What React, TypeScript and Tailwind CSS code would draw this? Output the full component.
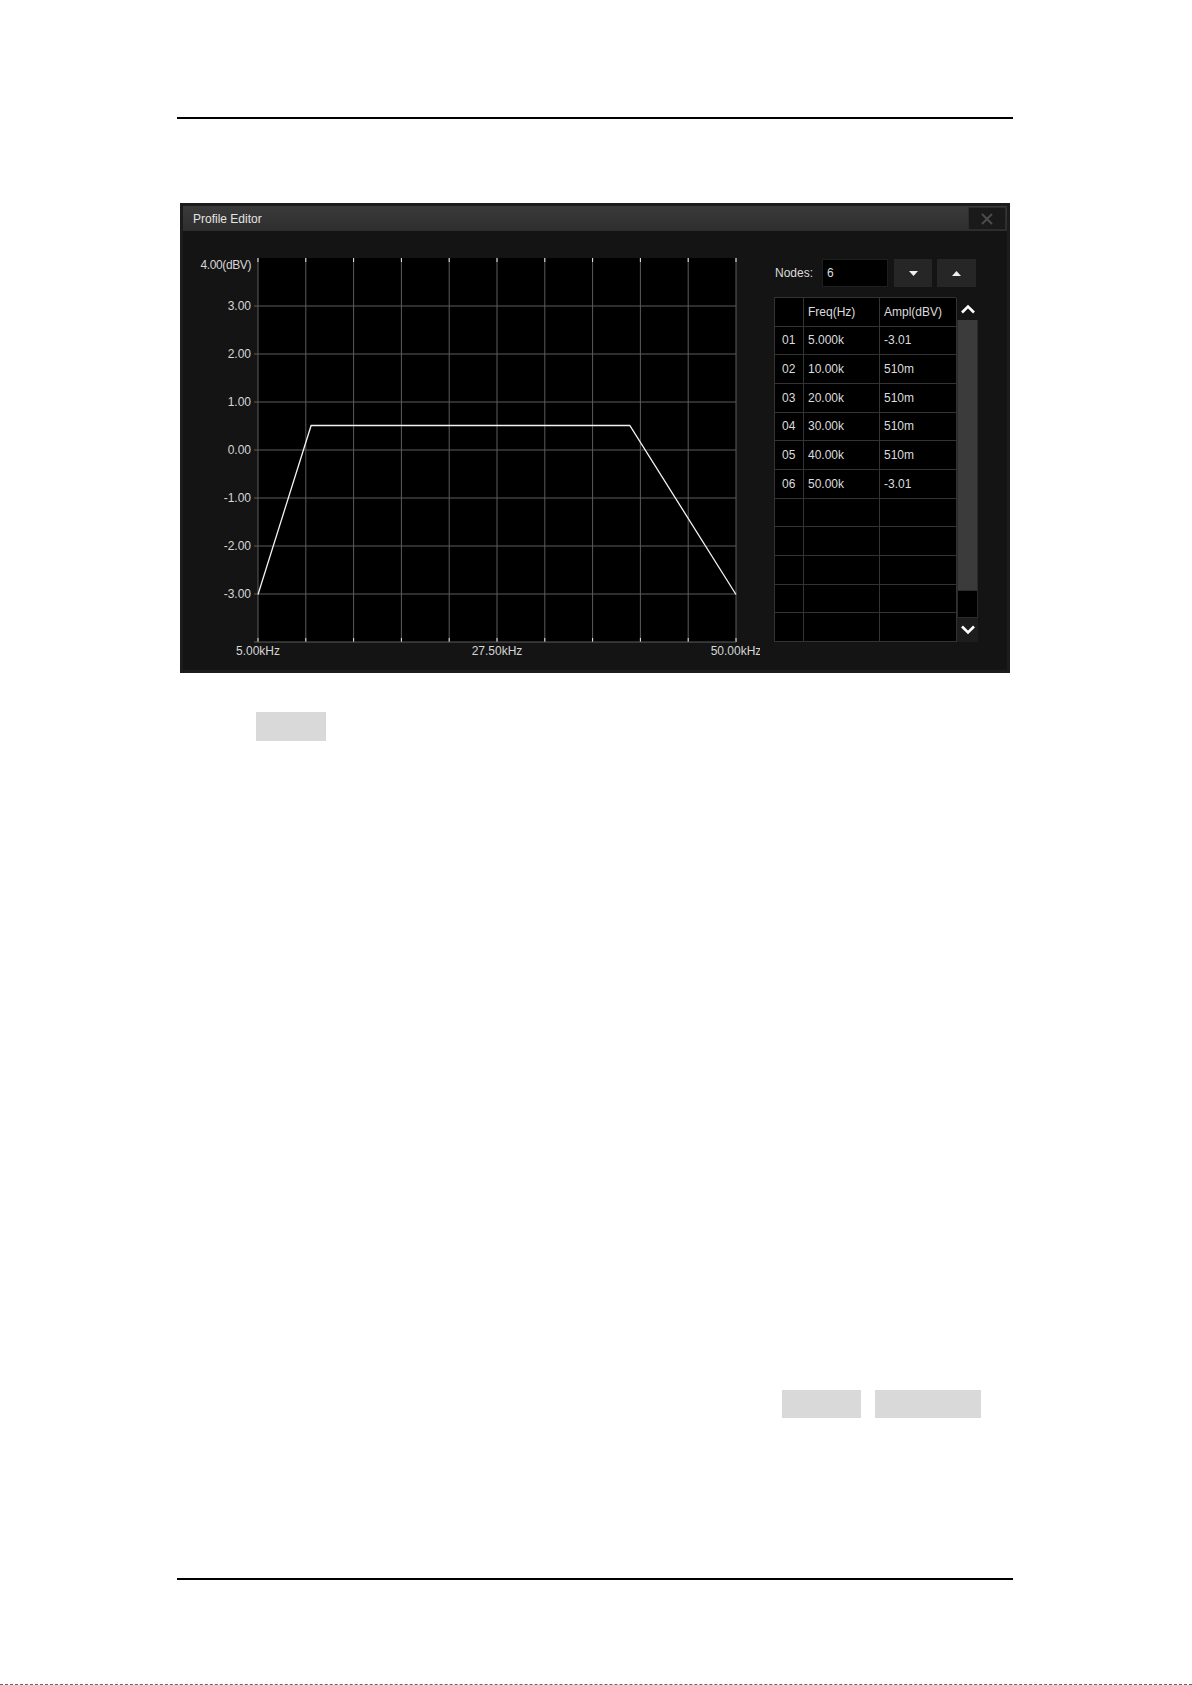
const nodes = [
  ['01', '5.000k', '-3.01'],
  ['02', '10.00k', '510m'],
  ['03', '20.00k', '510m'],
  ['04', '30.00k', '510m'],
  ['05', '40.00k', '510m'],
  ['06', '50.00k', '-3.01'],
];

// plot geometry inside the chart svg
const X0 = 68;
const Y0 = 18;
const W = 478;
const H = 384;

const px = (khz: number) => X0 + ((khz - 5) / 45) * W;
const py = (dbv: number) => Y0 + ((4 - dbv) / 8) * H;

function Chart() {
  const cols = Array.from({ length: 11 }, (_, i) => X0 + (W * i) / 10);
  const levels = [3, 2, 1, 0, -1, -2, -3, -4];
  const curve = [
    [5, -3.01],
    [10, 0.51],
    [20, 0.51],
    [30, 0.51],
    [40, 0.51],
    [50, -3.01],
  ]
    .map(([f, a]) => `${px(f)},${py(a)}`)
    .join(' ');

  return (
    <svg width={570} height={425} className="ml-[7px] mt-[9px] shrink-0 text-[12px]">
      <rect x={X0} y={Y0} width={W} height={H} fill="#000" />
      {cols.map((x, i) => (
        <g key={i}>
          <line x1={x} y1={Y0} x2={x} y2={Y0 + H} stroke="#5c5c5c" strokeWidth={1} />
          <line x1={x} y1={Y0} x2={x} y2={Y0 + 4} stroke="#e6e6e6" strokeWidth={1} />
          <line x1={x} y1={Y0 + H - 4} x2={x} y2={Y0 + H} stroke="#e6e6e6" strokeWidth={1} />
        </g>
      ))}
      {levels.map((v) => (
        <g key={v}>
          <line x1={X0 - 4} y1={py(v)} x2={X0 + W} y2={py(v)} stroke="#5c5c5c" strokeWidth={1} />
          {v > -4 && (
            <text x={X0 - 7} y={py(v) + 4} textAnchor="end" fill="#d6d6d6">
              {v.toFixed(2)}
            </text>
          )}
        </g>
      ))}
      <text x={X0 - 7} y={29} textAnchor="end" fill="#d6d6d6" letterSpacing={-0.4}>
        4.00(dBV)
      </text>
      <polyline points={curve} fill="none" stroke="#f2f2f2" strokeWidth={1.3} />
      <text x={X0} y={415} textAnchor="middle" fill="#d6d6d6">
        5.00kHz
      </text>
      <text x={X0 + W / 2} y={415} textAnchor="middle" fill="#d6d6d6">
        27.50kHz
      </text>
      <text x={X0 + W} y={415} textAnchor="middle" fill="#d6d6d6">
        50.00kHz
      </text>
    </svg>
  );
}

function Chevron({ up }: { up?: boolean }) {
  return (
    <svg width={16} height={10} viewBox="0 0 16 10">
      <polyline
        points={up ? '2,8.5 8,2.5 14,8.5' : '2,1.5 8,7.5 14,1.5'}
        fill="none"
        stroke="#fff"
        strokeWidth={2.6}
      />
    </svg>
  );
}

function Tri({ up }: { up?: boolean }) {
  return (
    <svg width={9} height={5} viewBox="0 0 9 5">
      <polygon points={up ? '0,5 4.5,0 9,5' : '0,0 4.5,5 9,0'} fill="#f0f0f0" />
    </svg>
  );
}

function NodeTable() {
  const rows = Array.from({ length: 11 }, (_, i) => nodes[i] ?? ['', '', '']);
  return (
    <div className="mt-[10px] flex gap-px">
      <div className="grid h-[345px] w-[182px] grid-cols-[29px_76px_77px] grid-rows-[repeat(12,minmax(0,1fr))] border-l border-t border-[#333] bg-black text-[12px] text-[#dcdcdc]">
        <div className="border-b border-r border-[#333]" />
        <div className="flex items-center border-b border-r border-[#333] pl-[4px]">Freq(Hz)</div>
        <div className="flex items-center border-b border-r border-[#333] pl-[4px]">Ampl(dBV)</div>
        {rows.map((r, i) => (
          <div key={i} className="contents">
            <div className="flex items-center border-b border-r border-[#333] pl-[7px]">{r[0]}</div>
            <div className="flex items-center border-b border-r border-[#333] pl-[4px]">{r[1]}</div>
            <div className="flex items-center border-b border-r border-[#333] pl-[4px]">{r[2]}</div>
          </div>
        ))}
      </div>
      <div className="flex h-[345px] w-[21px] flex-col">
        <div className="flex h-[23px] items-center justify-center bg-[#141414]">
          <Chevron up />
        </div>
        <div className="h-[270px] border-x border-[#2a2a2a] bg-[#3b3b3b]" />
        <div className="h-[28px] border border-[#2a2a2a] bg-black" />
        <div className="flex h-[24px] items-center justify-center bg-[#1d1d1d]">
          <Chevron />
        </div>
      </div>
    </div>
  );
}

function ProfileEditor() {
  return (
    <div className="ml-[3px] mt-[84px] flex h-[470px] w-[830px] flex-col border-[3px] border-[#1c1c1c] bg-[#141414]">
      <div className="flex h-[25px] items-center justify-between bg-gradient-to-b from-[#3a3a3a] to-[#2e2e2e]">
        <span className="pl-[10px] text-[12px] text-[#e4e4e4]">Profile Editor</span>
        <button className="mr-[1px] flex h-[23px] w-[38px] items-center justify-center border border-[#2c2c2c] bg-[#1a1a1a]">
          <svg width={14} height={14} viewBox="0 0 14 14">
            <path d="M2 2 L12 12 M12 2 L2 12" stroke="#4c4c4c" strokeWidth={2} />
          </svg>
        </button>
      </div>
      <div className="flex flex-1 items-start">
        <Chart />
        <div className="ml-[14px] mt-[28px] flex flex-col">
          <div className="flex h-[28px] items-center text-[12px] text-[#dcdcdc]">
            <span className="w-[48px] pl-[1px]">Nodes:</span>
            <div className="flex h-[28px] w-[66px] items-center border border-[#1e1e1e] bg-black pl-[4px]">6</div>
            <button className="ml-[6px] flex h-[28px] w-[38px] items-center justify-center bg-[#262626]">
              <Tri />
            </button>
            <button className="ml-[5px] flex h-[28px] w-[39px] items-center justify-center bg-[#262626]">
              <Tri up />
            </button>
          </div>
          <NodeTable />
        </div>
      </div>
    </div>
  );
}

export default function App() {
  return (
    <div className="flex h-[1685px] w-[1192px] flex-col bg-white font-['Liberation_Sans',Arial,sans-serif]">
      <div className="ml-[177px] flex w-[836px] flex-col">
        <div className="mt-[117px] h-[2px] bg-black" />
        <ProfileEditor />
        <div className="ml-[79px] mt-[39px] h-[29px] w-[70px] bg-[#d9d9d9]" />
        <div className="mr-[32px] mt-[649px] flex justify-end gap-[14px]">
          <div className="h-[28px] w-[79px] bg-[#d9d9d9]" />
          <div className="h-[28px] w-[106px] bg-[#d9d9d9]" />
        </div>
        <div className="mt-[160px] h-[2px] bg-black" />
      </div>
      <div className="mt-auto border-t border-dashed border-[#666]" />
    </div>
  );
}
